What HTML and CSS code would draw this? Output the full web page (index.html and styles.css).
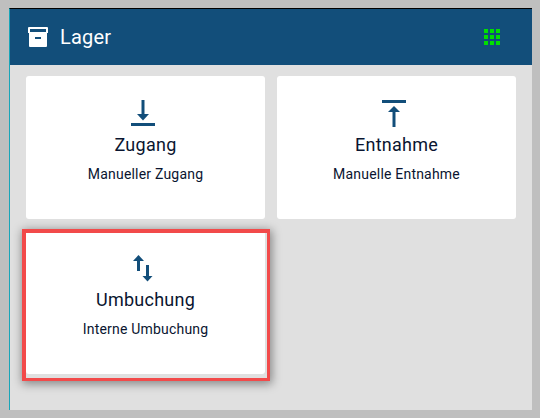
FILE: index.html
```html
<!DOCTYPE html>
<html lang="de">
<head>
    <meta charset="UTF-8">
    <meta name="viewport" content="width=device-width, initial-scale=1.0">
    <title>Lager</title>
    <link rel="stylesheet" href="styles.css">
</head>
<body>
    <div class="dialog">
        <div class="header">
            <div class="header-title">
                <svg class="archive-icon" width="20" height="20" viewBox="0 0 20 20">
                    <path fill="#fff" fill-rule="evenodd" d="M1 0h18a1 1 0 0 1 1 1v5h-1v13a1 1 0 0 1-1 1H2a1 1 0 0 1-1-1V6H0V1a1 1 0 0 1 1-1zM2 2v3h16V2zM7 10v2h6v-2z"/>
                </svg>
                <span>Lager</span>
            </div>
            <div class="grid-icon">
                <span></span><span></span><span></span>
                <span></span><span></span><span></span>
                <span></span><span></span><span></span>
            </div>
        </div>
        <div class="tiles">
            <div class="tile">
                <svg class="tile-icon" width="26" height="30" viewBox="0 0 26 30">
                    <path fill="#124e7a" d="M11.500 2h3v15h-3z"/>
                    <path fill="#124e7a" d="M7 16h12l-6 6.500z"/>
                    <path fill="#124e7a" d="M1 25h24v3H1z"/>
                </svg>
                <div class="tile-title">Zugang</div>
                <div class="tile-text">Manueller Zugang</div>
            </div>
            <div class="tile">
                <svg class="tile-icon" width="26" height="30" viewBox="0 0 26 30">
                    <path fill="#124e7a" d="M1 2h24v3H1z"/>
                    <path fill="#124e7a" d="M7 14h12L13 8z"/>
                    <path fill="#124e7a" d="M11.500 13h3v16h-3z"/>
                </svg>
                <div class="tile-title">Entnahme</div>
                <div class="tile-text">Manuelle Entnahme</div>
            </div>
            <div class="tile tile-marked">
                <svg class="tile-icon" width="26" height="30" viewBox="0 0 26 30">
                    <path fill="#124e7a" d="M3 8h11L8.500 2z"/>
                    <path fill="#124e7a" d="M7 7h3v11H7z"/>
                    <path fill="#124e7a" d="M16 12h3v12h-3z"/>
                    <path fill="#124e7a" d="M12.500 23h10l-5 5.500z"/>
                </svg>
                <div class="tile-title">Umbuchung</div>
                <div class="tile-text">Interne Umbuchung</div>
            </div>
        </div>
    </div>
</body>
</html>
```

FILE: styles.css
```css
body {
    margin: 0;
    height: 418px;
    overflow: hidden;
    background-color: #bfbfbf;
    font-family: Roboto, "Liberation Sans", sans-serif;
}

.dialog {
    width: 523px;
    height: 402px;
    margin: 8px 0 0 9px;
    box-sizing: border-box;
    background-color: #e0e0e0;
    border-top: 1px solid #000;
    border-left: 1px solid #1aa5b8;
}

.header {
    height: 56px;
    display: flex;
    align-items: center;
    justify-content: space-between;
    padding: 0 32px 0 18px;
    background-color: #124e7a;
    color: #fff;
}

.header-title {
    display: flex;
    align-items: center;
    gap: 12px;
    font-size: 20px;
    letter-spacing: 0.2px;
}

.grid-icon {
    display: grid;
    grid-template-columns: repeat(3, 4px);
    grid-auto-rows: 4px;
    gap: 2px;
}

.grid-icon span {
    background-color: #00e000;
}

.tiles {
    display: grid;
    grid-template-columns: 239px 239px;
    grid-auto-rows: 143px;
    gap: 12px;
    padding: 11px 0 0 16px;
}

.tile {
    position: relative;
    display: flex;
    flex-direction: column;
    align-items: center;
    padding-top: 22px;
    box-sizing: border-box;
    background-color: #fff;
    border-radius: 3px;
    color: #0a1530;
}

.tile-icon {
    margin-right: 5px;
}

.tile-title {
    margin-top: 5px;
    font-size: 18px;
    line-height: 24px;
    letter-spacing: 0.25px;
}

.tile-text {
    margin-top: 7px;
    font-size: 14px;
    line-height: 20px;
    letter-spacing: 0.2px;
}

/* red marker drawn over the screenshot, not quite centred on the tile */
.tile-marked::after {
    content: "";
    position: absolute;
    top: -2px;
    right: -5px;
    bottom: -7px;
    left: -4px;
    border: solid #f24a4a;
    border-width: 4px 3px 3px 4px;
    box-shadow: 1px 2px 9px 1px rgba(0, 0, 0, 0.4);
}
```
